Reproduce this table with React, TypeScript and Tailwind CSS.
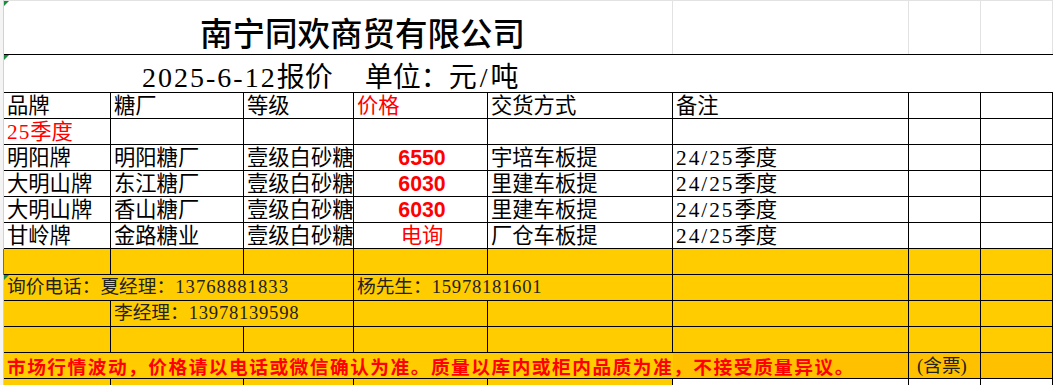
import type { ReactNode } from 'react'

const GRID = 'grid grid-cols-[107px_133px_110px_134px_185px_236px_72px_72px]'

type Quote = {
  brand: string
  mill: string
  grade: string
  price: string
  delivery: string
  season: string
}

const quotes: Quote[] = [
  { brand: '明阳牌', mill: '明阳糖厂', grade: '壹级白砂糖', price: '6550', delivery: '宇培车板提', season: '24/25' },
  { brand: '大明山牌', mill: '东江糖厂', grade: '壹级白砂糖', price: '6030', delivery: '里建车板提', season: '24/25' },
  { brand: '大明山牌', mill: '香山糖厂', grade: '壹级白砂糖', price: '6030', delivery: '里建车板提', season: '24/25' },
  { brand: '甘岭牌', mill: '金路糖业', grade: '壹级白砂糖', price: '电询', delivery: '厂仓车板提', season: '24/25' },
]

function Gutter({ green = false }: { green?: boolean }) {
  return (
    <div
      className={`w-[4px] shrink-0 bg-[#f4f4f4] border-r ${green ? 'border-[#1e9c4c]' : 'border-[#d2d2d2]'}`}
    />
  )
}

// little green error-indicator in the corner of a cell
function Flag() {
  return (
    <span className="absolute left-0 top-0 w-0 h-0 border-t-[5px] border-t-[#1a8a3c] border-r-[5px] border-r-transparent" />
  )
}

function Cell({ children, className = '' }: { children?: ReactNode; className?: string }) {
  return (
    <div
      className={`flex items-end overflow-hidden whitespace-nowrap border-r border-black pl-[3px] pb-[1px] leading-[22px] ${className}`}
    >
      {children}
    </div>
  )
}

function Row({ children, green = false, className = '' }: { children: ReactNode; green?: boolean; className?: string }) {
  return (
    <div className="flex h-[26px]">
      <Gutter green={green} />
      <div className={`${GRID} flex-1 border-b border-black ${className}`}>{children}</div>
    </div>
  )
}

export default function App() {
  return (
    <div className="w-[1053px] bg-white text-black font-['Liberation_Serif','Noto_Sans_CJK_SC',serif] text-[21.3px]">
      {/* title */}
      <div className="flex h-[55px]">
        <Gutter />
        <div className={`${GRID} flex-1 border-t border-t-[#e2e2e2] border-b border-b-black`}>
          <div className="relative col-span-5 border-r border-[#e2e2e2] pl-[196px] pt-[18px] text-[32.5px] leading-[32px] font-medium whitespace-nowrap">
            <Flag />
            南宁同欢商贸有限公司
          </div>
          <div className="border-r border-[#e2e2e2]" />
          <div className="border-r border-[#e2e2e2]" />
          <div className="border-r border-[#e2e2e2]" />
        </div>
      </div>

      {/* date / unit */}
      <div className="flex h-[38px]">
        <Gutter />
        <div className="relative flex-1 border-b border-black pl-[138px] pt-[9px] text-[28px] leading-[28px] whitespace-nowrap">
          <Flag />
          <span className="tracking-[2px]">2025-6-12</span>报价
          <span className="ml-[32px]">单位：元</span>
          <span className="mx-[3px]">/</span>吨
        </div>
      </div>

      {/* header */}
      <Row>
        <Cell>品牌</Cell>
        <Cell>糖厂</Cell>
        <Cell>等级</Cell>
        <Cell className="text-[#ff0000]">价格</Cell>
        <Cell>交货方式</Cell>
        <Cell>备注</Cell>
        <Cell />
        <Cell />
      </Row>

      <Row>
        <Cell className="text-[#ff0000]">
          <span className="tracking-[1px]">25</span>季度
        </Cell>
        <Cell />
        <Cell />
        <Cell />
        <Cell />
        <Cell />
        <Cell />
        <Cell />
      </Row>

      {quotes.map((q, i) => (
        <Row key={i}>
          <Cell>{q.brand}</Cell>
          <Cell>{q.mill}</Cell>
          <Cell>{q.grade}</Cell>
          <Cell className="justify-center pl-0 text-[#ff0000] font-['Liberation_Sans','Noto_Sans_CJK_SC',sans-serif]">
            <span className={/\d/.test(q.price) ? 'font-bold' : 'font-normal'}>{q.price}</span>
          </Cell>
          <Cell>{q.delivery}</Cell>
          <Cell>
            <span className="tracking-[2px]">{q.season}</span>季度
          </Cell>
          <Cell />
          <Cell />
        </Row>
      ))}

      {/* yellow block */}
      <Row green className="bg-[#ffcc00]">
        <Cell />
        <Cell />
        <Cell />
        <Cell />
        <Cell />
        <Cell />
        <Cell />
        <Cell />
      </Row>

      <Row className="bg-[#ffcc00] text-[18.7px] text-[#222]">
        <Cell className="relative col-span-3 pb-[2px]">
          <Flag />
          询价电话：夏经理：<span className="tracking-[1px]">13768881833</span>
        </Cell>
        <Cell className="col-span-2 pb-[2px]">
          杨先生：<span className="tracking-[0.7px]">15978181601</span>
        </Cell>
        <Cell />
        <Cell />
        <Cell />
      </Row>

      <Row className="bg-[#ffcc00] text-[18.7px] text-[#222]">
        <Cell />
        <Cell className="col-span-2 pb-[2px]">
          李经理：<span className="tracking-[0.7px]">13978139598</span>
        </Cell>
        <Cell />
        <Cell />
        <Cell />
        <Cell />
        <Cell />
      </Row>

      <Row className="bg-[#ffcc00]">
        <Cell />
        <Cell />
        <Cell />
        <Cell />
        <Cell />
        <Cell />
        <Cell />
        <Cell />
      </Row>

      <Row className="bg-[#ffcc00]">
        <div className="relative z-10 col-span-5 flex items-end whitespace-nowrap pl-[3px] pb-0 text-[18.7px] leading-[20px] font-bold tracking-[1.5px] text-[#ff0000]">
          市场行情波动，价格请以电话或微信确认为准。质量以库内或柜内品质为准，不接受质量异议。
        </div>
        <div className="border-r border-black bg-[#ffc000]" />
        <Cell className="bg-[#ffc000] pl-[8px] pb-0 text-[18.7px] text-[#222]">(含票)</Cell>
        <Cell className="bg-[#ffc000]" />
      </Row>

      <Row>
        <Cell className="bg-[#ffcc00]" />
        <Cell className="bg-[#ffcc00]" />
        <Cell className="bg-[#ffcc00]" />
        <Cell className="bg-[#ffcc00]" />
        <Cell className="bg-[#ffcc00]" />
        <Cell />
        <Cell />
        <Cell />
      </Row>
    </div>
  )
}
